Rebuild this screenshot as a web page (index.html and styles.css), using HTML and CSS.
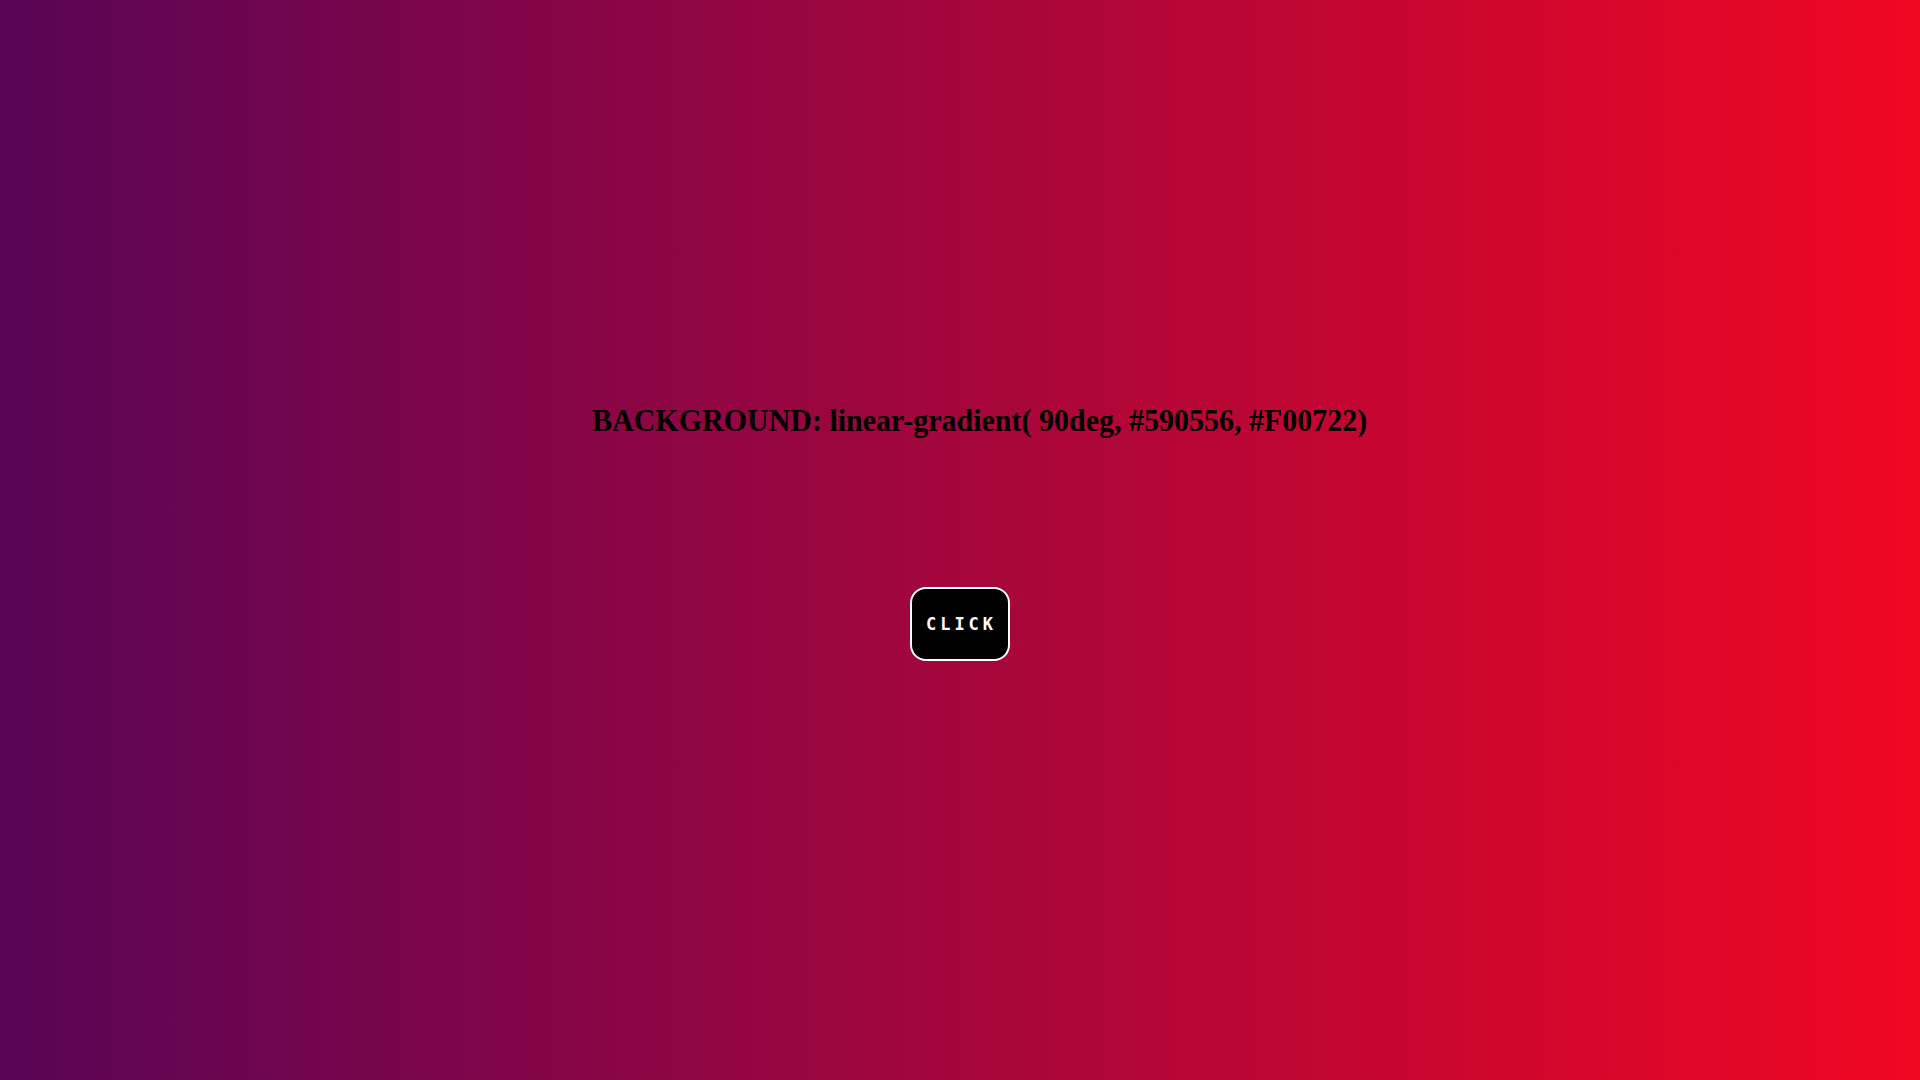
FILE: index.html
```html
<!DOCTYPE html>
<html lang="en">
<head>
<meta charset="utf-8">
<title>Gradient</title>
<link rel="stylesheet" href="styles.css">
</head>
<body>
<main class="stage">
  <h1 class="title"><span class="title-text">BACKGROUND: linear-gradient( 90deg, #590556, #F00722)</span></h1>
  <button class="click-btn" type="button">CLICK</button>
</main>
</body>
</html>
```
FILE: styles.css
```css
html, body {
  margin: 0;
  padding: 0;
  height: 100%;
}
body {
  background: linear-gradient(90deg, #590556, #F00722);
  font-family: "Liberation Serif", "Times New Roman", serif;
}
.stage {
  min-height: 100vh;
  box-sizing: border-box;
  display: flex;
  flex-direction: column;
  align-items: center;
  justify-content: center;
  padding-bottom: 20px;
}
.title {
  margin: 0 0 148px 0;
  padding: 2px 0 0 39px;
  font-size: 32px;
  font-weight: bold;
  color: #000;
  text-align: center;
}
.title-text {
  display: inline-block;
  transform: scaleX(0.937);
}
.click-btn {
  width: 100px;
  height: 74px;
  box-sizing: border-box;
  background: #000;
  border: 2px solid #fff;
  border-radius: 16px;
  color: #fff;
  font-family: "DejaVu Sans Mono", monospace;
  font-weight: bold;
  font-size: 17px;
  letter-spacing: 4px;
  padding: 0 0 0 3px;
  cursor: pointer;
}
```
